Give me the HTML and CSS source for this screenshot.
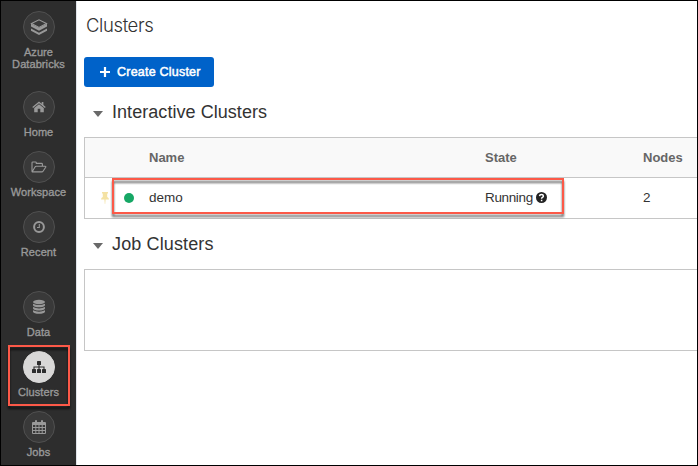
FILE: index.html
```html
<!DOCTYPE html>
<html lang="en">
<head>
<meta charset="utf-8">
<title>Clusters</title>
<link rel="stylesheet" href="styles.css">
</head>
<body>
<div class="app">
  <nav class="sidebar">
    <a class="item brand"><span class="disc"><svg width="18" height="18" viewBox="0 0 18 18"><path class="line" d="M1.500 5.600 9 1.800l7.500 3.800L9 9.400z"/><path d="M1 5.800 9 9.800l8-4v2.800L9 12.800 1 8.600z"/><path d="M1 10.500l8 4.200 8-4.200v2.300L9 17 1 12.800z"/></svg></span><span class="label">Azure<br>Databricks</span></a>
    <a class="item"><span class="disc"><svg width="14" height="12" viewBox="0 0 14 12"><path d="M7 3.200 11.800 7v4.200H8.300V7.800H5.700v3.400H2.200V7z"/><path d="M7 .5 9.700 2.700V1h1.700v3.100l2.300 1.900-.8 1L7 2.200 1.100 7l-.8-1z"/></svg></span><span class="label">Home</span></a>
    <a class="item"><span class="disc"><svg width="16" height="12" viewBox="0 0 16 12"><path class="line" d="M1 10.500V1.800Q1 1 1.800 1h2.700q.8 0 .8.800v.6h5.200q.9 0 .9.900v2M1.200 10.800 4 6q.4-.7 1.200-.7h9q1 0 .5.900L12.200 10q-.5.900-1.500.9H1.600q-.6 0-.6-.6"/></svg></span><span class="label">Workspace</span></a>
    <a class="item recent"><span class="disc"><svg width="14" height="14" viewBox="0 0 14 14"><circle class="line thick" cx="7" cy="7" r="4.900"/><path class="line" d="M7.300 4v3.500H5"/></svg></span><span class="label">Recent</span></a>
    <a class="item"><span class="disc"><svg width="14" height="16" viewBox="0 0 14 16"><ellipse cx="7" cy="3" rx="6" ry="2.200"/><path d="M1 4.700q6 2.800 12 0v1.500q-1 2-6 2t-6-2zM1 8q6 2.800 12 0v1.500q-1 2-6 2t-6-2zM1 11.300q6 2.800 12 0v1.500q-1 2-6 2t-6-2z"/></svg></span><span class="label">Data</span></a>
    <a class="item active"><span class="disc"><svg width="14" height="12" viewBox="0 0 14 12"><rect x="5" width="4" height="4" rx=".6"/><rect y="8" width="4" height="4" rx=".6"/><rect x="5" y="8" width="4" height="4" rx=".6"/><rect x="10" y="8" width="4" height="4" rx=".6"/><path class="line" d="M7 3v6M2 9V6h10v3"/></svg></span><span class="label">Clusters</span><i class="callout callout-nav"></i></a>
    <a class="item"><span class="disc"><svg width="14" height="14" viewBox="0 0 14 14"><path fill-rule="evenodd" d="M1 2h2V.3h2V2h4V.3h2V2h2q1 0 1 1v10q0 1-1 1H1q-1 0-1-1V3q0-1 1-1zM1 5v2h2.300V5zM4.300 5v2h2.200V5zM7.500 5v2h2.200V5zM10.700 5v2H13V5zM1 8v2h2.300V8zM4.300 8v2h2.200V8zM7.500 8v2h2.200V8zM10.700 8v2H13V8zM1 11v2h2.300v-2zM4.300 11v2h2.200v-2zM7.500 11v2h2.200v-2zM10.700 11v2H13v-2z"/></svg></span><span class="label">Jobs</span></a>
  </nav>
  <main class="main">
    <h1>Clusters</h1>
    <button class="create"><svg width="10" height="10" viewBox="0 0 10 10"><path d="M3.900 0h2.200v3.900H10v2.200H6.100V10H3.900V6.100H0V3.900h3.900z"/></svg><span>Create Cluster</span></button>
    <h2 class="interactive"><i class="caret"></i><span>Interactive Clusters</span></h2>
    <section class="table">
      <div class="row head"><span></span><span></span><span>Name</span><span>State</span><span>Nodes</span></div>
      <div class="row">
        <span class="pin"><svg width="8" height="12" viewBox="0 0 8 12"><path d="M1 0h6v1.300l-.8.400v3.200Q8 5.700 8 7.500H4.600L4.200 12h-.4l-.4-4.500H0q0-1.800 1.800-2.600V1.700L1 1.300z"/></svg></span>
        <span class="status"><i class="dot"></i></span>
        <span class="name">demo</span>
        <span class="state"><span class="running">Running</span><svg width="11" height="11" viewBox="0 0 11 11"><circle cx="5.500" cy="5.500" r="5.500"/><path class="question" d="M3.500 4.100Q3.700 2.500 5.500 2.500t1.900 1.500Q7.400 4.900 6.400 5.400q-.8.400-.8 1.300M5.600 7.700v1.500"/></svg></span>
        <span class="nodes">2</span>
        <i class="callout callout-row"></i>
      </div>
    </section>
    <h2 class="job"><i class="caret"></i><span>Job Clusters</span></h2>
    <section class="empty"></section>
  </main>
</div>
</body>
</html>
```
FILE: styles.css
```css
* { box-sizing: border-box; }
body {
  margin: 0;
  font: 14px "Liberation Sans", Arial, sans-serif;
  color: #333;
}
.app {
  display: flex;
  width: 698px;
  height: 466px;
  border: 1px solid #000;
  background: #fff;
  overflow: hidden;
}
.sidebar {
  width: 75px;
  flex: none;
  padding-top: 10px;
  background: #2d2d2d;
}
.item {
  position: relative;
  display: flex;
  flex-direction: column;
  align-items: center;
  height: 60px;
  padding-left: 1px;
  color: #999;
}
.brand { height: 80px; }
.recent { margin-bottom: 20px; }
.disc {
  display: flex;
  align-items: center;
  justify-content: center;
  width: 32px;
  height: 32px;
  border: 1px solid #505050;
  border-radius: 50%;
  background: #393939;
}
.disc svg { fill: currentColor; }
.disc .line { fill: none; stroke: currentColor; stroke-width: 1.1; }
.disc .thick { stroke-width: 2; }
.active .disc { background: #d9d8d7; border-color: #d9d8d7; color: #2d2d2d; }
.label {
  margin: 3px 1px 0 0;
  font-size: 11px;
  line-height: 12px;
  letter-spacing: .08px;
  text-align: center;
  white-space: nowrap;
  -webkit-text-stroke: .35px currentColor;
}
.callout {
  position: absolute;
  border: 2px solid #fc5948;
}
.callout-nav {
  left: 7px;
  top: -6px;
  width: 62px;
  height: 61px;
  filter: drop-shadow(0 3px 1px rgba(0, 0, 0, .65));
}
.callout-row {
  left: 27px;
  top: 0;
  width: 452px;
  height: 36px;
  filter: drop-shadow(0 3px 1px rgba(0, 0, 0, .58));
}
.main {
  flex: 1;
  min-width: 0;
  padding-left: 7px;
  border-left: 1px solid #e0e4ea;
}
h1, h2 { margin: 0; font-weight: 400; white-space: nowrap; }
h1 {
  height: 56px;
  padding: 13px 0 0 2px;
  font-family: Inter, "Liberation Sans", sans-serif;
  font-size: 18.500px;
  font-weight: 300;
  line-height: 23px;
  letter-spacing: -.4px;
  color: #333;
}
.create {
  display: flex;
  align-items: center;
  width: 130px;
  height: 30px;
  padding: 0 0 0 16px;
  gap: 7px;
  border: 0;
  border-radius: 3px;
  background: #0062c9;
  color: #fff;
  font: 12.500px "Liberation Sans", Arial, sans-serif;
  letter-spacing: .22px;
  white-space: nowrap;
  -webkit-text-stroke: .5px #fff;
}
.create svg { fill: #fff; flex: none; }
h2 {
  display: flex;
  align-items: center;
  gap: 9px;
  padding-left: 9px;
  font-size: 18px;
  letter-spacing: .05px;
}
.interactive { height: 50px; }
.job { height: 50px; letter-spacing: .13px; }
.caret {
  margin-top: 3px;
  border: 5px solid transparent;
  border-top: 6px solid #696969;
  border-bottom: 0;
}
.table {
  border: 1px solid #c6c6c6;
  border-right: 0;
}
.row {
  position: relative;
  display: grid;
  grid-template-columns: 28px 36px 336px 158px 1fr;
  align-items: center;
  height: 40px;
}
.head {
  height: 40px;
  border-bottom: 1px solid #c6c6c6;
  background: #f9f9f9;
  color: #666;
  font-size: 13px;
  font-weight: 700;
}
.pin, .status { display: flex; }
.pin { padding-left: 16px; }
.pin svg { fill: #f4e2a4; }
.status { padding-left: 11px; }
.dot { width: 10px; height: 10px; border-radius: 50%; background: #16a765; }
.name, .nodes { padding-bottom: 1px; font-size: 13.500px; }
.state { display: flex; align-items: center; gap: 3px; padding-bottom: 1px; }
.running { font-size: 13.500px; letter-spacing: -.35px; }
.state svg { fill: #222; }
.state .question { fill: none; stroke: #fff; stroke-width: 1.500; }
.empty {
  height: 82px;
  border: 1px solid #c6c6c6;
  border-right: 0;
}
```
